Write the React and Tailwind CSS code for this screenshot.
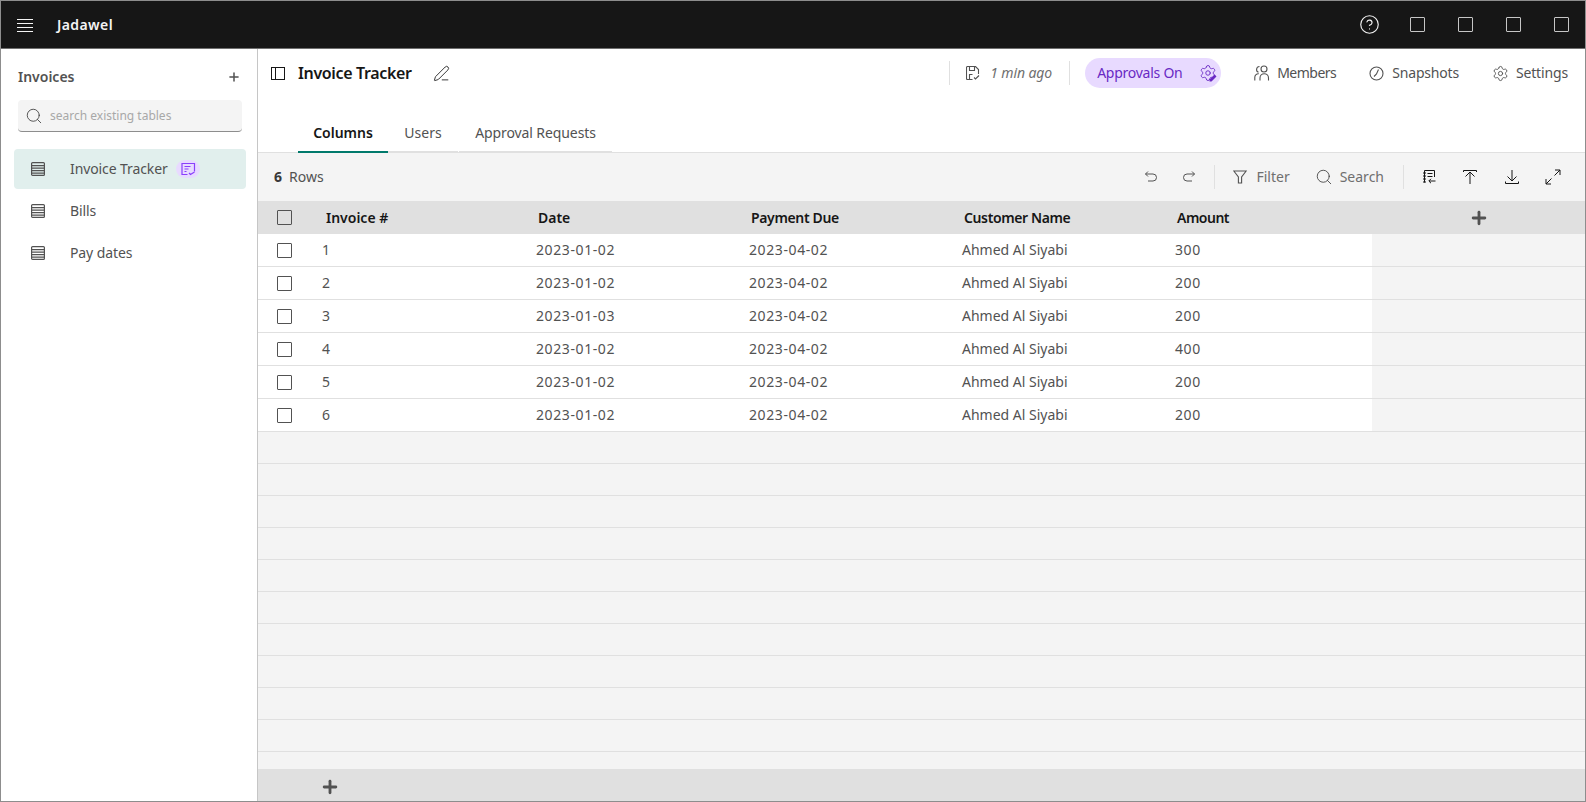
import React from 'react';
import { Search, Plus, Settings, PenLine, CircleHelp } from 'lucide-react';

const tables = ['Invoice Tracker', 'Bills', 'Pay dates'];
const headers = [
  { label: 'Invoice #', cls: 'pl-[19px]' },
  { label: 'Date', cls: 'pl-[18px]' },
  { label: 'Payment Due', cls: 'pl-[18px] tracking-[-0.35px]' },
  { label: 'Customer Name', cls: 'pl-[18px] tracking-[-0.38px]' },
  { label: 'Amount', cls: 'pl-[18px] tracking-[-0.5px]' },
];
const rows = [
  { id: 1, date: '2023-01-02', amount: 300 },
  { id: 2, date: '2023-01-02', amount: 200 },
  { id: 3, date: '2023-01-03', amount: 200 },
  { id: 4, date: '2023-01-02', amount: 400 },
  { id: 5, date: '2023-01-02', amount: 200 },
  { id: 6, date: '2023-01-02', amount: 200 },
];

const TableIcon = () => (
  <svg width="14" height="14" viewBox="0 0 14 14" fill="none" stroke="#525252" strokeWidth="1.2" className="shrink-0">
    <rect x="0.6" y="0.6" width="12.8" height="12.8" rx="1" />
    <path d="M0.6 3.6h12.8M0.6 6.1h12.8M0.6 8.6h12.8M0.6 11.1h12.8" />
  </svg>
);

const Checkbox = () => <div className="w-[15px] h-[15px] border-[1.5px] border-[#525252] rounded-[1px] shrink-0" />;

const ToolbarDivider = () => <div className="w-px h-6 bg-[#e0e0e0]" />;

const App = () => {
  return (
    <div className="w-full h-screen flex flex-col border border-[#8d8d8d] bg-white overflow-hidden font-['Noto_Sans',sans-serif] text-sm text-[#525252]">
      <header className="h-[48px] shrink-0 bg-[#161616] border-b border-[#6f6f6f] flex items-center text-white">
        <svg width="16" height="14" viewBox="0 0 16 14" fill="none" stroke="#f4f4f4" strokeWidth="1" className="ml-[16px]">
          <path d="M0 1.5h16M0 5.5h16M0 9.5h16M0 13.5h16" />
        </svg>
        <span className="ml-[24px] font-semibold text-[#f4f4f4] tracking-[0.4px]">Jadawel</span>
        <div className="ml-auto flex">
          <button className="w-12 h-[47px] flex items-center justify-center">
            <CircleHelp size={21} strokeWidth={1.3} color="#f4f4f4" />
          </button>
          {[0, 1, 2, 3].map((i) => (
            <button key={i} className="w-12 h-[47px] flex items-center justify-center">
              <div className="w-[15px] h-[15px] border-[1.5px] border-[#c6c6c6] rounded-[1px]" />
            </button>
          ))}
        </div>
      </header>

      <div className="flex flex-1 min-h-0">
        <aside className="w-[257px] shrink-0 border-r border-[#c6c6c6] flex flex-col">
          <div className="flex items-center justify-between pl-[17px] pr-[16px] pt-[15px] h-[41px]">
            <span className="font-semibold text-[#525252]">Invoices</span>
            <Plus size={14} strokeWidth={2.6} />
          </div>
          <div className="ml-[17px] mr-[15px] mt-[10px] h-8 flex items-center bg-[#f4f4f4] border-b border-[#8d8d8d] rounded">
            <Search size={18} strokeWidth={1.1} className="ml-[7px] text-[#393939]" />
            <span className="ml-[7px] text-xs text-[#a8a8a8]">search existing tables</span>
          </div>
          <nav className="mt-[17px] ml-[13px] mr-[11px] flex flex-col">
            {tables.map((name, i) => (
              <div key={name} className={`h-10 mb-[2px] flex items-center pl-[17px] rounded ${i === 0 ? 'bg-[#e1efed]' : ''}`}>
                <TableIcon />
                <span className="ml-[25px] tracking-[-0.1px]">{name}</span>
                {i === 0 && (
                  <span className="ml-[8.5px] w-6 h-[18px] rounded-full bg-[#e8daff] flex items-center justify-center">
                    <svg width="15" height="14" viewBox="0 0 15 14" fill="none" stroke="#8a3ffc" strokeWidth="1.2">
                      <path d="M6.5 12.5H1V1.5h12.5v8" />
                      <path d="M3.5 4.5h6M3.5 7h4M3.5 9.5h2M8 11l1.5 1.5L13.5 10" />
                    </svg>
                  </span>
                )}
              </div>
            ))}
          </nav>
        </aside>

        <main className="flex-1 min-w-0 flex flex-col">
          <div className="h-12 shrink-0 flex items-center pl-[13px] pr-[17px]">
            <svg width="14" height="13" viewBox="0 0 14 13" fill="none" stroke="#161616" strokeWidth="1" className="shrink-0">
              <rect x="0.5" y="0.5" width="13" height="12" />
              <path d="M4.5 0.5v12" />
            </svg>
            <h1 className="ml-[13px] text-base font-semibold text-[#161616] tracking-[-0.35px]">Invoice Tracker</h1>
            <PenLine size={17} strokeWidth={1.2} className="ml-[21px] text-[#161616]" />
            <div className="ml-auto flex items-center">
              <ToolbarDivider />
              <svg width="14" height="14" viewBox="0 0 14 14" fill="none" stroke="#525252" strokeWidth="1.1" className="ml-[16px]">
                <path d="M6.5 13.5H1.5a1 1 0 0 1-1-1v-11a1 1 0 0 1 1-1h8l3 3v4.5" />
                <path d="M3.5 0.5v4h5v-4M3.5 13V8.5h3M8 11.5l1.5 1.5 3.5-3.5" />
              </svg>
              <span className="ml-[10px] italic text-[#6f6f6f] tracking-[-0.1px]">1 min ago</span>
              <div className="ml-[17px]"><ToolbarDivider /></div>
              <div className="ml-[15px] h-[30px] w-[136px] rounded-full bg-[#e8daff] flex items-center pl-3 text-[#6929c4]">
                <span className="tracking-[-0.25px]">Approvals On</span>
                <span className="relative ml-auto mr-[4.5px]">
                  <Settings size={18} strokeWidth={1.2} />
                  <svg width="8" height="8" viewBox="0 0 8 8" className="absolute right-0 bottom-0" fill="#6929c4">
                    <path d="M0.5 7.5V5.5L5.5 0.5l2 2-5 5z" />
                  </svg>
                </span>
              </div>
              <svg width="16" height="16" viewBox="0 0 16 16" fill="none" stroke="#525252" strokeWidth="1.1" className="ml-[33px]">
                <circle cx="10" cy="4" r="3" />
                <path d="M5.5 1.5a3 3 0 0 0-1 5.8" />
                <path d="M0.8 15.5v-3.3a3.5 3.5 0 0 1 4-3.4" />
                <path d="M6 15.5v-2.5a4 4 0 0 1 8.5 0v2.5" />
              </svg>
              <span className="ml-[7px] tracking-[-0.5px]">Members</span>
              <svg width="15" height="15" viewBox="0 0 15 15" fill="none" stroke="#525252" strokeWidth="1.1" className="ml-[33px]">
                <circle cx="7.5" cy="7.5" r="6.5" />
                <path d="M9.5 3.5L7.5 8L5 10.5" />
              </svg>
              <span className="ml-2 tracking-[-0.2px]">Snapshots</span>
              <Settings size={17} strokeWidth={1.3} className="ml-[33px]" />
              <span className="ml-[7px] tracking-[-0.15px]">Settings</span>
            </div>
          </div>

          <div className="h-14 shrink-0 border-b border-[#e0e0e0] flex items-end pl-[40px]">
            <div className="w-[90px] h-[38px] flex items-center justify-center font-semibold text-[#161616] border-b-2 border-[#00796b] -mb-px">Columns</div>
            <div className="w-[70px] h-[38px] flex items-center justify-center border-b-2 border-[#e0e0e0] -mb-px">Users</div>
            <div className="ml-px w-[153px] h-[38px] flex items-center justify-center border-b-2 border-[#e0e0e0] -mb-px tracking-[-0.1px]">Approval Requests</div>
          </div>

          <div className="flex-1 min-h-0 bg-[#f4f4f4] flex flex-col">
            <div className="h-12 shrink-0 flex items-center pl-4 pr-[24px]">
              <span className="font-bold text-[#393939]">6</span>
              <span className="ml-[7px]">Rows</span>
              <div className="ml-auto flex items-center">
                <svg width="14" height="14" viewBox="0 0 14 14" fill="none" stroke="#525252" strokeWidth="1">
                  <path d="M4 1.5L1.5 4L4 6.5M1.5 4H9a3.5 3.5 0 0 1 0 7H4" />
                </svg>
                <svg width="14" height="14" viewBox="0 0 14 14" fill="none" stroke="#525252" strokeWidth="1" className="ml-[24px]">
                  <path d="M10 1.5L12.5 4L10 6.5M12.5 4H5a3.5 3.5 0 0 0 0 7h5" />
                </svg>
                <div className="ml-[18px]"><ToolbarDivider /></div>
                <svg width="14" height="14" viewBox="0 0 14 14" fill="none" stroke="#525252" strokeWidth="1.1" className="ml-[18px]">
                  <path d="M0.8 1h12.4L8.6 7v6H5.4V7z" />
                </svg>
                <span className="ml-[9px] text-[#6f6f6f]">Filter</span>
                <Search size={18} strokeWidth={1.1} className="ml-[25px] text-[#393939]" />
                <span className="ml-[7px] text-[#6f6f6f]">Search</span>
                <div className="ml-[19px]"><ToolbarDivider /></div>
                <svg width="16" height="16" viewBox="0 0 16 16" fill="none" stroke="#161616" strokeWidth="1" className="ml-[17px]">
                  <path d="M3.5 13.5V1.5h10V8" />
                  <path d="M2 4h3M2 7h3M2 10h3M2 13h3M6.5 4.5h5M6.5 7.5h5M14.5 12H8M10 9.8L7.8 12L10 14.2" />
                </svg>
                <svg width="16" height="16" viewBox="0 0 16 16" fill="none" stroke="#161616" strokeWidth="1" className="ml-[25px]">
                  <path d="M1.5 3V1.5h13V3M8 15V3M3.5 7.5L8 3l4.5 4.5" />
                </svg>
                <svg width="16" height="16" viewBox="0 0 16 16" fill="none" stroke="#161616" strokeWidth="1" className="ml-[26px]">
                  <path d="M8 1v11M3.5 7.5L8 12l4.5-4.5M1.5 12.5v2h13v-2" />
                </svg>
                <svg width="16" height="16" viewBox="0 0 16 16" fill="none" stroke="#161616" strokeWidth="1" className="ml-[25px]">
                  <path d="M9.5 6.5L15 1M10 1h5v5M6.5 9.5L1 15M1 10v5h5" />
                </svg>
              </div>
            </div>

            <div className="h-[33px] shrink-0 bg-[#e0e0e0] flex items-center font-semibold text-[#161616]">
              <div className="w-[49px] shrink-0 pl-[19px]"><Checkbox /></div>
              {headers.map((h) => (
                <div key={h.label} className={`w-[213px] shrink-0 ${h.cls}`}>{h.label}</div>
              ))}
              <div className="flex-1 flex justify-center">
                <Plus size={20} strokeWidth={3.4} className="text-[#525252] mt-px" />
              </div>
            </div>

            {rows.map((r) => (
              <div key={r.id} className="h-[33px] shrink-0 flex items-center border-b border-[#e0e0e0]">
                <div className="w-[1114px] h-full bg-white flex items-center shrink-0">
                  <div className="w-[49px] shrink-0 pl-[19px]"><Checkbox /></div>
                  <div className="w-[213px] shrink-0 pl-[15px]">{r.id}</div>
                  <div className="w-[213px] shrink-0 pl-[16px] tracking-[0.6px]">{r.date}</div>
                  <div className="w-[213px] shrink-0 pl-[16px] tracking-[0.6px]">2023-04-02</div>
                  <div className="w-[213px] shrink-0 pl-[16px]">Ahmed Al Siyabi</div>
                  <div className="w-[213px] shrink-0 pl-[16px] tracking-[0.6px]">{r.amount}</div>
                </div>
              </div>
            ))}

            <div className="flex-1 min-h-0 overflow-hidden">
              {Array.from({ length: 10 }).map((_, i) => (
                <div key={i} className="h-8 border-b border-[#e0e0e0]" />
              ))}
            </div>

            <div className="h-8 shrink-0 bg-[#e0e0e0] flex items-center pl-[62px]">
              <Plus size={20} strokeWidth={3.4} className="text-[#525252] mt-[3px]" />
            </div>
          </div>
        </main>
      </div>
    </div>
  );
};

export default App;
